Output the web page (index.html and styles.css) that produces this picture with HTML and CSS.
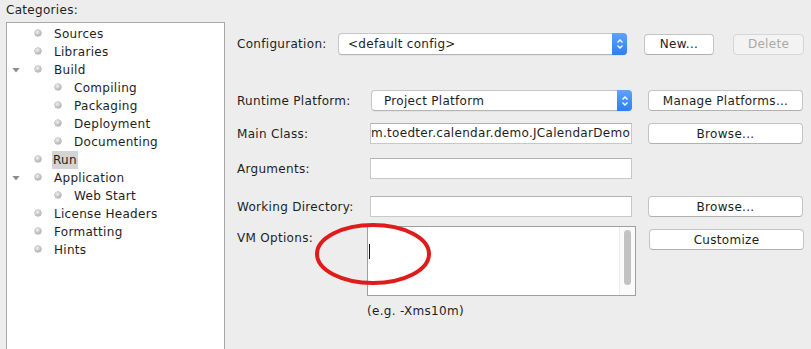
FILE: index.html
```html
<!DOCTYPE html>
<html lang="en">
<head>
    <meta charset="UTF-8">
    <title>Project Properties - Run</title>
    <link rel="stylesheet" href="styles.css">
</head>
<body>
    <div class="page">
        <div class="categories">
            <div class="categories-title">Categories:</div>
            <div class="tree">
                <div class="tree-item"><span class="twisty"></span><span class="dot"></span><span class="tree-label">Sources</span></div>
                <div class="tree-item"><span class="twisty"></span><span class="dot"></span><span class="tree-label">Libraries</span></div>
                <div class="tree-item"><span class="twisty open"></span><span class="dot"></span><span class="tree-label">Build</span></div>
                <div class="tree-item child"><span class="twisty"></span><span class="dot"></span><span class="tree-label">Compiling</span></div>
                <div class="tree-item child"><span class="twisty"></span><span class="dot"></span><span class="tree-label">Packaging</span></div>
                <div class="tree-item child"><span class="twisty"></span><span class="dot"></span><span class="tree-label">Deployment</span></div>
                <div class="tree-item child"><span class="twisty"></span><span class="dot"></span><span class="tree-label">Documenting</span></div>
                <div class="tree-item"><span class="twisty"></span><span class="dot"></span><span class="tree-label selected">Run</span></div>
                <div class="tree-item"><span class="twisty open"></span><span class="dot"></span><span class="tree-label">Application</span></div>
                <div class="tree-item child"><span class="twisty"></span><span class="dot"></span><span class="tree-label">Web Start</span></div>
                <div class="tree-item"><span class="twisty"></span><span class="dot"></span><span class="tree-label">License Headers</span></div>
                <div class="tree-item"><span class="twisty"></span><span class="dot"></span><span class="tree-label">Formatting</span></div>
                <div class="tree-item"><span class="twisty"></span><span class="dot"></span><span class="tree-label">Hints</span></div>
            </div>
        </div>

        <div class="settings">
            <div class="row row-config">
                <label class="label label-config">Configuration:</label>
                <div class="combo combo-config">
                    <span class="combo-text">&lt;default config&gt;</span>
                    <span class="stepper">
                        <svg width="8" height="12" viewBox="0 0 8 12"><path d="M1.5 4.5 L4 2 L6.5 4.5 M1.5 7.5 L4 10 L6.5 7.5" fill="none" stroke="#fff" stroke-width="1.4"/></svg>
                    </span>
                </div>
                <button class="btn btn-new">New...</button>
                <button class="btn btn-delete" disabled>Delete</button>
            </div>

            <div class="row row-runtime">
                <label class="label">Runtime Platform:</label>
                <div class="combo combo-runtime">
                    <span class="combo-text">Project Platform</span>
                    <span class="stepper">
                        <svg width="8" height="12" viewBox="0 0 8 12"><path d="M1.5 4.5 L4 2 L6.5 4.5 M1.5 7.5 L4 10 L6.5 7.5" fill="none" stroke="#fff" stroke-width="1.4"/></svg>
                    </span>
                </div>
                <button class="btn btn-wide">Manage Platforms...</button>
            </div>

            <div class="row row-main">
                <label class="label">Main Class:</label>
                <div class="field field-main">m.toedter.calendar.demo.JCalendarDemo</div>
                <button class="btn btn-wide">Browse...</button>
            </div>

            <div class="row row-args">
                <label class="label">Arguments:</label>
                <div class="field"></div>
            </div>

            <div class="row row-workdir">
                <label class="label">Working Directory:</label>
                <div class="field"></div>
                <button class="btn btn-wide">Browse...</button>
            </div>

            <div class="row row-vm">
                <label class="label label-vm">VM Options:</label>
                <div class="textarea">
                    <span class="caret"></span>
                    <div class="scrollbar"><div class="thumb"></div></div>
                </div>
                <button class="btn btn-wide btn-customize">Customize</button>
            </div>

            <div class="hint">(e.g. -Xms10m)</div>

            <svg class="mark" width="130" height="72" viewBox="0 0 130 72">
                <ellipse cx="65" cy="36" rx="56" ry="29" fill="none" stroke="#e01b1b" stroke-width="4"/>
            </svg>
        </div>
    </div>
</body>
</html>
```

FILE: styles.css
```css
body {
    margin: 0;
    background-color: #ededed;
    font-family: "DejaVu Sans", "Liberation Sans", sans-serif;
    font-size: 12px;
    letter-spacing: 0.3px;
    color: #1e1e1e;
}

.page {
    display: flex;
    height: 349px;
    overflow: hidden;
}

/* left tree */

.categories {
    width: 219px;
    padding-left: 6px;
    display: flex;
    flex-direction: column;
}

.categories-title {
    height: 22px;
    line-height: 21px;
}

.tree {
    flex: 1;
    background: white;
    border: 1px solid #a8a8a8;
    border-bottom: none;
    padding-top: 2px;
}

.tree-item {
    display: flex;
    align-items: center;
    height: 18px;
    padding-left: 5px;
}

.tree-item.child {
    padding-left: 25px;
}

.twisty {
    width: 8px;
    height: 5px;
}

.twisty.open {
    background: #8c8c8c;
    clip-path: polygon(0 0, 100% 0, 50% 100%);
}

.dot {
    width: 6px;
    height: 6px;
    margin-left: 15px;
    margin-top: -3px;
    border-radius: 50%;
    background: radial-gradient(circle at 40% 35%, #f4f4f4, #a9a9a9 80%);
    box-shadow: 0 0 0 0.5px #9a9a9a;
}

.tree-label {
    margin-left: 12px;
    line-height: 18px;
    padding: 0 1px;
    margin-right: -1px;
}

.tree-label.selected {
    background: #d4d4d4;
    margin-left: 11px;
}

/* right settings panel */

.settings {
    position: relative;
    flex: 1;
    padding-left: 12px;
}

.row {
    display: flex;
    align-items: center;
}

.label {
    width: 133px;
    flex-shrink: 0;
}

.label-config {
    width: 101px;
}

.label-vm {
    padding-top: 5px;
}

.row-config {
    margin-top: 33px;
    height: 22px;
}

.row-runtime {
    margin-top: 35px;
    height: 21px;
}

.row-main {
    margin-top: 12px;
    height: 21px;
}

.row-args {
    margin-top: 14px;
    height: 21px;
}

.row-workdir {
    margin-top: 17px;
    height: 21px;
}

.row-vm {
    margin-top: 9px;
    align-items: flex-start;
}

.combo {
    display: flex;
    align-items: center;
    background: white;
    border: 1px solid #c6c6c6;
    border-bottom-color: #b5b5b5;
    border-radius: 4px;
    box-sizing: border-box;
    height: 22px;
    box-shadow: 0 1px 0 rgba(0,0,0,0.04);
}

.combo-config {
    width: 289px;
}

.combo-runtime {
    width: 261px;
    height: 21px;
    margin-left: 1px;
}

.combo-text {
    flex: 1;
    padding-left: 9px;
}

.combo-runtime .combo-text {
    padding-left: 12px;
}

.stepper {
    width: 15px;
    align-self: stretch;
    margin: -1px -1px -1px 0;
    border-radius: 0 4px 4px 0;
    background: linear-gradient(#5fa3fb, #2c7ef3);
    display: flex;
    align-items: center;
    justify-content: center;
}

.btn {
    font-family: inherit;
    font-size: 12px;
    letter-spacing: 0.3px;
    color: #1e1e1e;
    background: white;
    border: 1px solid #c4c4c4;
    border-bottom-color: #b0b0b0;
    border-radius: 4px;
    height: 21px;
    padding: 0;
    box-sizing: border-box;
}

.btn-new {
    width: 70px;
    margin-left: 17px;
}

.btn-delete {
    width: 71px;
    margin-left: 19px;
    background: #f3f3f3;
    border-color: #d6d6d6;
    color: #a9a9a9;
}

.btn-wide {
    width: 155px;
    margin-left: 16px;
}

.btn-customize {
    margin-top: 3px;
    margin-left: 13px;
}

.field {
    width: 262px;
    height: 21px;
    box-sizing: border-box;
    background: white;
    border: 1px solid #c8c8c8;
    border-top-color: #b2b2b2;
    line-height: 19px;
    overflow: hidden;
    white-space: nowrap;
}

.field-main {
    direction: rtl;
    text-align: left;
}

.textarea {
    position: relative;
    width: 269px;
    height: 70px;
    margin-left: -3px;
    box-sizing: border-box;
    background: white;
    border: 1px solid #9f9f9f;
}

.caret {
    display: block;
    width: 1px;
    height: 15px;
    background: #111;
    margin: 17px 0 0 1px;
}

.scrollbar {
    position: absolute;
    top: 0;
    right: 0;
    bottom: 0;
    width: 15px;
    border-left: 1px solid #ececec;
    background: #fafafa;
}

.thumb {
    width: 7px;
    height: 55px;
    margin: 3px 0 0 4px;
    border-radius: 4px;
    background: #c2c2c2;
}

.hint {
    margin: 8px 0 0 130px;
}

.mark {
    position: absolute;
    left: 83px;
    top: 218px;
}
```
